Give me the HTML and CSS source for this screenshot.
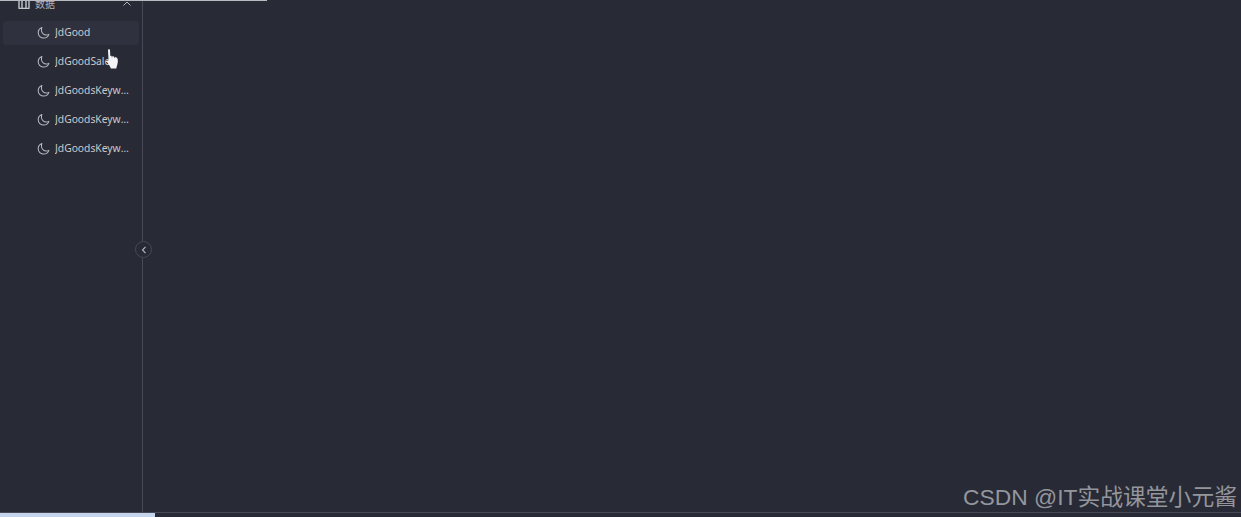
FILE: index.html
```html
<!DOCTYPE html>
<html lang="zh">
<head>
<meta charset="utf-8">
<title>数据</title>
<link rel="stylesheet" href="styles.css">
</head>
<body>
<div class="top-line"></div>
<div class="main">
  <aside class="sidebar">
    <nav class="menu">
      <div class="menu-head">
        <svg class="head-icon" width="12" height="12" viewBox="0 0 12 12"><path d="M0.500 1H11.500M1 1V11.500M4 1V11.500M8 1V11.500M11 1V11.500M0.500 11.500H11.500" fill="none" stroke="currentColor" stroke-width="1.400"/></svg>
        <span class="head-label">数据</span>
        <svg class="chev" width="8" height="5" viewBox="0 0 8 5"><path d="M0.500 4.500L4 1L7.500 4.500" fill="none" stroke="currentColor"/></svg>
      </div>
      <a class="item active"><svg class="moon" viewBox="0 0 14 14"><use href="#moon"/></svg><span class="label">JdGood</span></a>
      <a class="item"><svg class="moon" viewBox="0 0 14 14"><use href="#moon"/></svg><span class="label">JdGoodSales</span></a>
      <a class="item"><svg class="moon" viewBox="0 0 14 14"><use href="#moon"/></svg><span class="label">JdGoodsKeywords</span></a>
      <a class="item"><svg class="moon" viewBox="0 0 14 14"><use href="#moon"/></svg><span class="label">JdGoodsKeywords</span></a>
      <a class="item"><svg class="moon" viewBox="0 0 14 14"><use href="#moon"/></svg><span class="label">JdGoodsKeywords</span></a>
    </nav>
  </aside>
  <div class="content"></div>
  <button class="collapse" type="button" aria-label="collapse"><svg width="6" height="8" viewBox="0 0 6 8"><path d="M4.500 0.800L1.500 4L4.500 7.200" fill="none" stroke="currentColor" stroke-width="1.100"/></svg></button>
  <svg class="cursor" width="13" height="20" viewBox="0 0 13 20"><path d="M2 1.200C2 0 4 0 4 1.200L4.300 7L5.500 6.800L6 8.800L6.600 7L8 7.500L8.400 9.300L9 8L10.500 8.600C11.800 9.500 12 11 11.800 13C11.500 15.500 10.800 17 10.300 19.500H4.800C4 17 2.800 15.500 1 13C0.500 12 1.500 11 2.600 12Z" fill="#f4f4f6"/></svg>
  <div class="watermark">CSDN @IT实战课堂小元酱</div>
</div>
<div class="bottom">
  <div class="scroll-thumb"></div>
</div>
<svg class="defs" width="0" height="0"><defs><symbol id="moon" viewBox="0 0 14 14"><path d="M5.300 1.500C3 2.300 1.300 4.500 1.300 7.200C1.300 10.500 4 13 7.200 13C9.800 13 12 11.400 12.800 9C12 9.500 11 9.700 10 9.700C7.200 9.700 4.800 7.400 4.800 4.500C4.800 3.400 5 2.400 5.300 1.500Z" fill="none" stroke="currentColor" stroke-width="1.100" stroke-linejoin="round"/></symbol></defs></svg>
</body>
</html>
```

FILE: styles.css
```css
* { box-sizing: border-box; }
html, body { margin: 0; height: 100%; }
body {
  display: flex;
  flex-direction: column;
  height: 517px;
  overflow: hidden;
  background: #282a36;
  color: #c9cad0;
  font-family: "Noto Sans", "Noto Sans CJK SC", sans-serif;
  font-size: 10.300px;
}
.top-line { flex: none; width: 267px; height: 1px; background: #b9bac0; }
.main { position: relative; flex: 1; display: flex; min-height: 0; overflow: hidden; }
.sidebar { flex: none; width: 143px; border-right: 1px solid #474a56; overflow: hidden; }
.menu { display: flex; flex-direction: column; gap: 5px; margin-top: -9px; padding: 0 3px; width: 142px; }
.menu-head { display: flex; align-items: center; height: 24px; padding: 0 8px 2px 15px; flex: none; }
.head-icon { flex: none; color: #c4c5cb; }
.head-label { margin-left: 5px; flex: 1; font-size: 10px; color: #b4b5bc; }
.chev { flex: none; color: #b4b5bc; }
.item { display: flex; align-items: center; height: 24px; padding: 0 8px 2px 34px; border-radius: 3px; flex: none; }
.item.active { background: #2f323e; }
.moon { flex: none; width: 13px; height: 13px; color: #b9bac1; }
.label { margin-left: 5px; overflow: hidden; white-space: nowrap; text-overflow: ellipsis; min-width: 0; color: #c8c9cc; }
.content { flex: 1; }
.collapse {
  position: absolute;
  left: 135px;
  top: 240px;
  width: 17px;
  height: 17px;
  padding: 0;
  display: flex;
  align-items: center;
  justify-content: center;
  border: 1px solid #474a56;
  border-radius: 50%;
  background: #282a36;
  color: #b9bac1;
}
.cursor { position: absolute; left: 106px; top: 48px; }
.watermark {
  position: absolute;
  right: 4px;
  bottom: 1px;
  font-family: "Liberation Sans", "Noto Sans CJK SC", sans-serif;
  font-size: 22.800px;
  line-height: 28px;
  color: #94969c;
  white-space: nowrap;
}
.bottom { flex: none; height: 5px; border-top: 1px solid #474a56; background: #282a36; }
.scroll-thumb { width: 155px; height: 4px; background: #c5d5ee; }
.defs { position: absolute; }
```
